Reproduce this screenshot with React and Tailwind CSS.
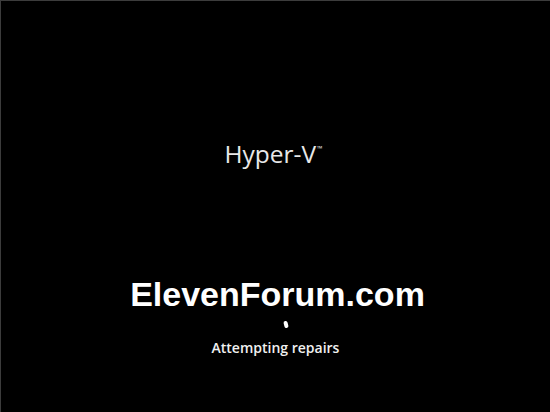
export default function App() {
  return (
    <div className="w-[550px] h-[412px] bg-black border-t border-l border-[#3c3c3c] flex flex-col items-center overflow-hidden">
      <div
        className="mt-[138px] mr-[4px] flex items-start text-[#e8e8e8] font-normal text-[24.5px] leading-[30px]"
        style={{ fontFamily: '"Open Sans", "Noto Sans", sans-serif' }}
      >
        <span>Hyper-V</span>
        <span className="text-[7px] leading-[10px] mt-[5px] ml-[1px]">™</span>
      </div>
      <div
        className="mt-[105px] ml-[4px] text-white font-bold text-[34px] leading-[40px]"
        style={{ fontFamily: '"Liberation Sans", Arial, sans-serif' }}
      >
        ElevenForum.com
      </div>
      <div className="mt-[7px] ml-[20px] w-[4px] h-[7px] rounded-full bg-white rotate-[-15deg]" />
      <div
        className="mt-[10px] text-[#f0f0f0] font-semibold text-[14px] leading-[20px]"
        style={{ fontFamily: '"Open Sans", "Noto Sans", sans-serif' }}
      >
        Attempting repairs
      </div>
    </div>
  )
}
